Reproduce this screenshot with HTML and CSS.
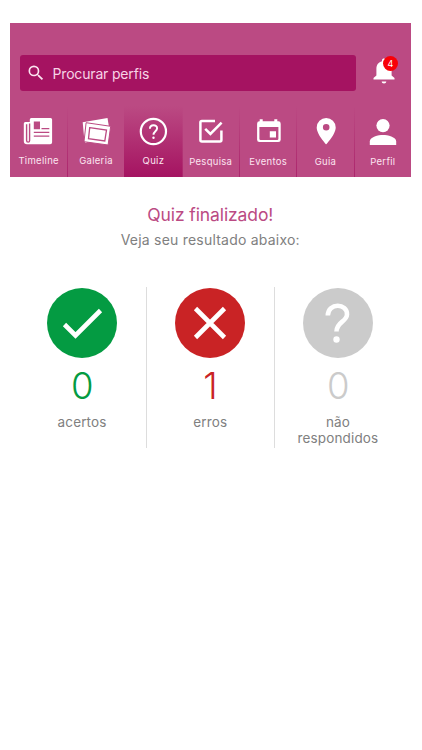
FILE: index.html
```html
<!DOCTYPE html>
<html lang="pt-BR">
<head>
<meta charset="utf-8">
<title>Quiz</title>
<link rel="stylesheet" href="styles.css">
</head>
<body>
<header class="header">
  <div class="topbar">
    <div class="search">
      <svg class="search-icon" viewBox="0 0 24 24"><path d="M15.5 14h-.79l-.28-.27A6.47 6.47 0 0 0 16 9.5 6.5 6.5 0 1 0 9.5 16c1.61 0 3.09-.59 4.23-1.57l.27.28v.79l5 4.99L20.49 19zm-6 0a4.5 4.5 0 1 1 0-9 4.5 4.5 0 0 1 0 9z"/></svg>
      <span>Procurar perfis</span>
    </div>
    <div class="bell">
      <svg viewBox="0 0 22 26"><path d="M11 25.5c1.400 0 2.300-.9 2.300-2H8.700c0 1.100.9 2 2.300 2zM18.600 17.500V10.500c0-3.800-2.200-6.500-5.600-7.300V2.200c0-1-.8-1.700-2-1.700s-2 .7-2 1.700v1C5.600 4 3.400 6.700 3.400 10.500v7L.5 20v1.500h21V20z"/></svg>
      <span class="badge">4</span>
    </div>
  </div>
  <nav class="tabs">
    <a class="tab">
      <svg viewBox="0 0 30 30"><path d="M8.300 2H27.600Q29.100 2 29.100 3.500V26.300Q29.100 28.300 27.100 28.300H4Q.8 28.300 .8 25V7.500Q.8 6 2.300 6H6.800V3.500Q6.800 2 8.300 2z"/><path class="cut wide" d="M6.600 7.500v17q0 1.600-1.400 1.600-1.600 0-1.600-1.600V8.200"/><path class="pink" d="M10.800 5.600h6.200v7.600h-6.200zM18.500 12h7.800v1.200h-7.800zM10.800 15.800h15.500v1.300H10.800zM10.800 19.500h15.500v1.300H10.800z"/></svg>
      <span>Timeline</span>
    </a>
    <a class="tab">
      <svg viewBox="0 0 30 30"><path d="M1.700 6.300 26.500 2l1.300 8-23 17-1.300-1.500z"/><path class="front" d="M5.100 6.700 29.700 10.300 27.100 29 3 25.700z"/><path class="photo" d="m8.700 11.700 16.800 2.400-1.700 10.800-16.300-2.300z"/></svg>
      <span>Galeria</span>
    </a>
    <a class="tab active">
      <svg viewBox="0 0 30 30"><circle class="line" cx="15.400" cy="15.500" r="12.600"/><path class="line thin" d="M11.900 12.700c0-4.500 7.400-4.500 7.200-.3-.1 2.700-3.500 3-3.600 6.300"/><circle cx="15.500" cy="21.800" r="1.200"/></svg>
      <span>Quiz</span>
    </a>
    <a class="tab low">
      <svg viewBox="0 0 30 30"><path class="line bold" d="M20 4.900H6.900Q5.400 4.900 5.400 6.400v17.500q0 1.500 1.500 1.500h18q1.500 0 1.500-1.500V14.500M10.200 12.800l5.200 5.200L26.600 6.600"/></svg>
      <span>Pesquisa</span>
    </a>
    <a class="tab low">
      <svg viewBox="0 0 30 30"><path fill-rule="evenodd" d="M6.700 3.300h3v2h11.600v-2h3v2h1.100Q27.700 5.300 27.700 7.700v16Q27.700 26 25.300 26H6.500Q4.100 26 4.100 23.700v-16Q4.100 5.300 6.500 5.300h.2zM6.400 11v11.700q0 1.200 1.200 1.200h16.600q1.200 0 1.200-1.200V11zM16.800 15.200h6.200v6.200h-6.200z"/></svg>
      <span>Eventos</span>
    </a>
    <a class="tab low">
      <svg viewBox="0 0 30 30"><path fill-rule="evenodd" d="M16.200 1.900A9.500 9.500 0 0 0 6.700 11.400C6.700 18.300 16.200 28.300 16.200 28.300S25.700 18.300 25.700 11.400A9.500 9.500 0 0 0 16.200 1.900zM16.200 8a3.300 3.300 0 1 1 0 6.600 3.300 3.300 0 0 1 0-6.600z"/></svg>
      <span>Guia</span>
    </a>
    <a class="tab low">
      <svg viewBox="0 0 30 30"><circle cx="16" cy="9.600" r="6.600"/><path d="M2.800 29v-3.500c0-4.700 8.600-6.500 13.200-6.500s13.200 1.800 13.200 6.500V29z"/></svg>
      <span>Perfil</span>
    </a>
  </nav>
</header>
<main>
  <h1>Quiz finalizado!</h1>
  <p class="subtitle">Veja seu resultado abaixo:</p>
  <section class="results">
    <div class="result green">
      <svg viewBox="0 0 70 70"><circle cx="35" cy="35" r="35"/><path d="M17.500 36.500 28.500 47.500 53.500 22.500"/></svg>
      <strong>0</strong><span>acertos</span>
    </div>
    <div class="result red">
      <svg viewBox="0 0 70 70"><circle cx="35" cy="35" r="35"/><path d="M20.500 20.500 49.500 49.500M49.500 20.500 20.500 49.500"/></svg>
      <strong>1</strong><span>erros</span>
    </div>
    <div class="result gray">
      <svg viewBox="0 0 70 70"><circle cx="35" cy="35" r="35"/><path d="M24.800 27.500C25 14.500 44.500 15 44 26.500 43.700 34 33.500 33.500 33.500 43.500"/><circle class="dot" cx="33.500" cy="51.500" r="3.200"/></svg>
      <strong>0</strong><span>não respondidos</span>
    </div>
  </section>
</main>
</body>
</html>
```

FILE: styles.css
```css
* { box-sizing: border-box; }

body {
  margin: 0;
  padding: 23px 11px 0 9.500px;
  background: #fff;
  font-family: Inter, "Liberation Sans", sans-serif;
}

svg { display: block; fill: #fff; }

.header {
  height: 154px;
  background: #bb4a83;
  color: #fff;
}

.topbar {
  display: flex;
  height: 83px;
  padding: 32px 0 0 10.500px;
}

.search {
  display: flex;
  align-items: center;
  width: 336px;
  height: 36px;
  padding-left: 6px;
  border-radius: 3px;
  background: #a51361;
  color: #f7d3e7;
  font-size: 14px;
  letter-spacing: -0.170px;
}

.search-icon {
  width: 20px;
  height: 20px;
  margin: -1px 6.500px 0 0;
  fill: #fbe4f0;
}

.bell {
  position: relative;
  width: 22px;
  height: 26px;
  margin: 3px 0 0 16.500px;
}

.badge {
  position: absolute;
  top: -2px;
  left: 10.500px;
  width: 15px;
  height: 15px;
  border-radius: 50%;
  background: #f80008;
  font-size: 9px;
  line-height: 15px;
  text-align: center;
}

.tabs {
  display: grid;
  grid-template-columns: repeat(7, 1fr);
  height: 71px;
}

.tab {
  display: flex;
  flex-direction: column;
  align-items: center;
  padding-top: 10px;
  background: linear-gradient(#a5136100, #a51361aa) left / 1px 100% no-repeat;
  color: #fce4f0;
  font-size: 9.500px;
  line-height: 12px;
  letter-spacing: 0.300px;
}

.tab:first-child { background: none; }

.tab svg { width: 30px; height: 30px; }

.tab span { margin: 8.500px -1px 0 0; }

.tab.low span { margin-top: 9.500px; }

.tab.active { background: linear-gradient(#bb4a83, #a51361); }

.line {
  fill: none;
  stroke: #fff;
  stroke-width: 2.200;
}

.thin { stroke-width: 1.900; }

.bold { stroke-width: 2.500; }

.cut {
  fill: none;
  stroke: #bb4a83;
  stroke-width: 1;
}

.wide { stroke-width: 1.400; }

.pink { fill: #bb4a83; }

.front {
  stroke: #bb4a83;
  stroke-width: 1;
}

.photo {
  stroke: #bb4a83;
  stroke-width: 1.300;
}

main { text-align: center; }

h1 {
  margin: 26px 0 0;
  color: #bb4a83;
  font-size: 17.500px;
  font-weight: 400;
  line-height: 24px;
  letter-spacing: -0.100px;
}

.subtitle {
  margin: 4px 0 0;
  color: #808080;
  font-size: 14px;
  line-height: 18px;
  letter-spacing: 0.220px;
}

.results {
  display: grid;
  grid-template-columns: repeat(3, 127.700px);
  justify-content: center;
  height: 161px;
  margin-top: 38px;
}

.result {
  display: flex;
  flex-direction: column;
  align-items: center;
  padding: 0 20px;
  background: linear-gradient(#ddd, #ddd) left / 1px 100% no-repeat;
}

.result:first-child {
  padding: 0 20.500px 0 19.500px;
  background: none;
}

.result svg {
  width: 70px;
  height: 70px;
  margin-top: 0.500px;
  fill: currentColor;
}

.result path {
  fill: none;
  stroke: #fff;
  stroke-width: 4.600;
}

.result strong {
  margin-top: 6px;
  font-size: 36.500px;
  font-weight: 300;
  line-height: 44px;
  letter-spacing: -0.500px;
}

.result span {
  margin-top: 6px;
  color: #808080;
  font-size: 13.500px;
  line-height: 16.500px;
  letter-spacing: 0.150px;
}

.green { color: #049b42; }
.red { color: #c92325; }
.gray { color: #cbcbcb; }
.result .dot { fill: #fff; }
```
